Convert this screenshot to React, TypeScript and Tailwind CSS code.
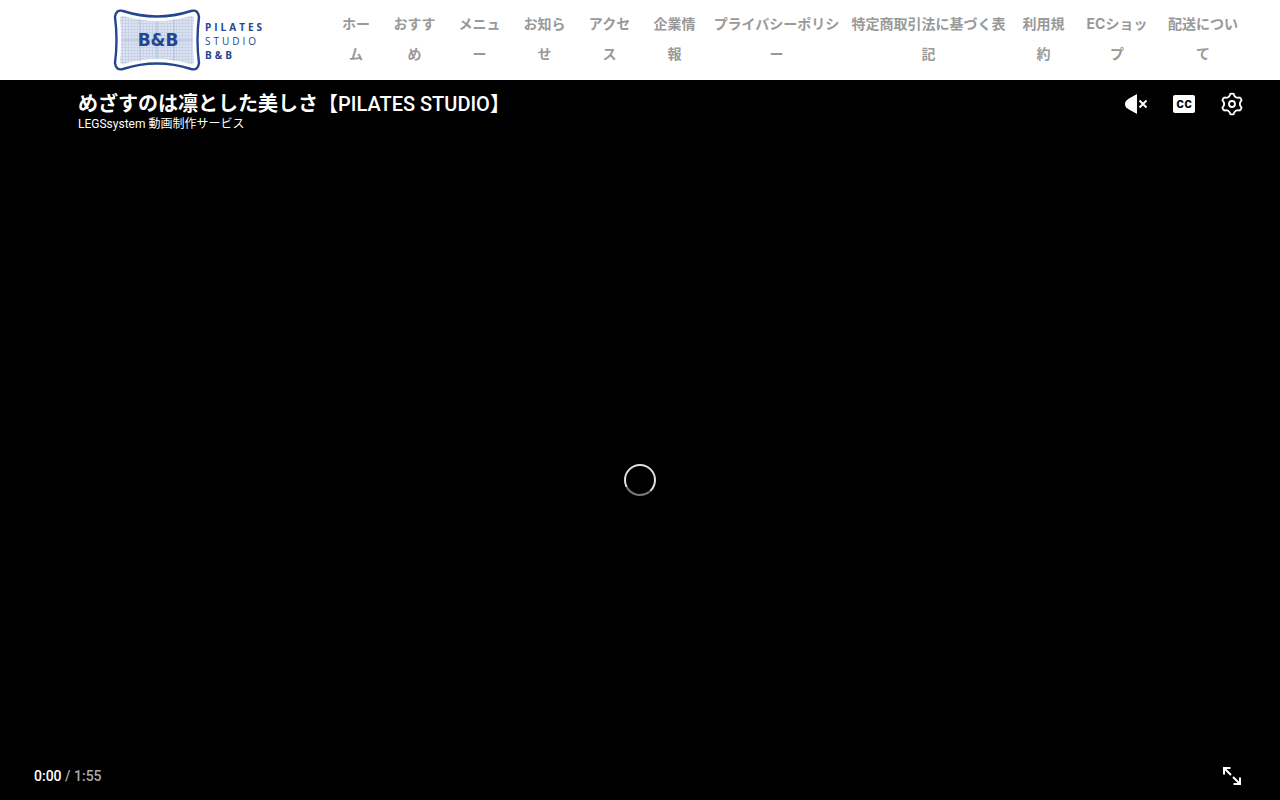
import type { ReactNode } from 'react';

type NavItem = { first: string; second: string };

const navItems: NavItem[] = [
  { first: 'ホー', second: 'ム' },
  { first: 'おすす', second: 'め' },
  { first: 'メニュ', second: 'ー' },
  { first: 'お知ら', second: 'せ' },
  { first: 'アクセ', second: 'ス' },
  { first: '企業情', second: '報' },
  { first: 'プライバシーポリシ', second: 'ー' },
  { first: '特定商取引法に基づく表', second: '記' },
  { first: '利用規', second: '約' },
  { first: 'ECショッ', second: 'プ' },
  { first: '配送につい', second: 'て' },
];

const FRAME = 'M13 3Q47 14 81 3Q88 1 89 9Q86 32 89 55Q88 63 81 61Q47 50 13 61Q6 63 5 55Q8 32 5 9Q6 1 13 3Z';
const FRAME_INNER = 'M14 8Q47 18 80 8Q84 7 84 11Q82 32 84 53Q84 57 80 56Q47 46 14 56Q10 57 10 53Q12 32 10 11Q10 7 14 8Z';

const Logo = () => (
  <svg viewBox="0 0 160 64" className="h-16 w-40" role="img" aria-label="PILATES STUDIO B&B">
    <defs>
      <pattern id="logo-grid" width="3" height="3" patternUnits="userSpaceOnUse">
        <rect width="3" height="3" fill="#dde4f1" />
        <path d="M0 .5h3M.5 0v3" stroke="#c8d3e8" strokeWidth="1" />
      </pattern>
    </defs>
    <path d={FRAME} fill="#fff" stroke="#24468f" strokeWidth="2.4" />
    <path d={FRAME_INNER} fill="url(#logo-grid)" />
    <path d="M11 32h72M30 11v42M47 13v38M64 11v42" stroke="#b0bfde" strokeWidth="1" />
    <text x="48" y="38" textAnchor="middle" fill="#24468f" className="font-['DejaVu_Sans'] text-[17px] font-bold">
      B&amp;B
    </text>
    <g fill="#24468f" className="font-['Open_Sans'] text-[10px]">
      <text x="95" y="23" className="font-bold tracking-[3px]">PILATES</text>
      <text x="95" y="37" className="tracking-[3px]">STUDIO</text>
      <text x="95" y="51" className="font-bold tracking-[3px]">B&amp;B</text>
    </g>
  </svg>
);

const MuteIcon = () => (
  <svg viewBox="0 0 24 24" className="size-6" fill="none">
    <path d="M13 2v20L5 17.5C2.5 16 1 14.5 1 12s1.5-4 4-5.500z" fill="currentColor" />
    <path d="M15.5 8.5l7 7M22.5 8.5l-7 7" stroke="currentColor" strokeWidth="2" />
  </svg>
);

const CaptionsIcon = () => (
  <svg viewBox="0 0 24 24" className="size-6">
    <rect x="1" y="3" width="22" height="18" rx="2" fill="currentColor" />
    <text x="8" y="16" textAnchor="middle" fill="#000" className="font-[Roboto] text-[11px] font-black">
      C
    </text>
    <text x="16" y="16" textAnchor="middle" fill="#000" className="font-[Roboto] text-[11px] font-black">
      C
    </text>
  </svg>
);

const SettingsIcon = () => (
  <svg viewBox="0 0 24 24" className="size-6" fill="none" stroke="currentColor" strokeWidth="1.8" strokeLinejoin="round">
    <path d="M10.3 1.9Q12 1.200 13.7 1.9Q15 6.8 19.700 5.500Q21.200 6.600 21.600 8.400Q18 12 21.600 15.600Q21.200 17.400 19.700 18.500Q15 17.200 13.700 22.100Q12 22.800 10.300 22.100Q9 17.200 4.300 18.500Q2.800 17.400 2.400 15.600Q6 12 2.400 8.400Q2.800 6.600 4.300 5.500Q9 6.800 10.300 1.900Z" />
    <circle cx="12" cy="12" r="3" />
  </svg>
);

const FullscreenIcon = () => (
  <svg viewBox="0 0 24 24" className="size-6" fill="none" stroke="currentColor" strokeWidth="2">
    <path d="M4 10.5V4h6.500M4 4l7 7M20 13.5V20h-6.500M20 20l-7-7" />
  </svg>
);

const Spinner = () => (
  <svg viewBox="0 0 34 34" className="size-[34px]" fill="none" strokeWidth="2" role="status" aria-label="読み込み中">
    <circle cx="17" cy="17" r="15" stroke="#e0e0e0" />
    <path d="M27 28A15 15 0 0 1 3.5 24" stroke="#000" strokeWidth="3" />
    <path d="M26.64 28.49A15 15 0 0 1 3.75 24.04" stroke="#777" />
  </svg>
);

const PlayerButton = ({ label, children }: { label: string; children: ReactNode }) => (
  <button type="button" aria-label={label} className="flex size-12 items-center justify-center text-white">
    {children}
  </button>
);

const Header = () => (
  <header className="flex h-20 items-center bg-white pr-8">
    <a href="#home" className="ml-[110px] shrink-0">
      <Logo />
    </a>
    <nav className="ml-[60px] flex-1 pb-[2px]">
      <ul className="grid grid-cols-[52fr_65fr_65fr_65fr_65fr_65fr_139fr_165fr_65fr_82fr_90fr] text-center text-[14px] leading-[30px] font-bold text-[#999]">
        {navItems.map((item) => (
          <li key={item.first} className="flex justify-center">
            <a href="#menu" className="whitespace-nowrap">
              {item.first}
              <br />
              {item.second}
            </a>
          </li>
        ))}
      </ul>
    </nav>
  </header>
);

const VideoPlayer = () => (
  <section className="flex flex-1 flex-col bg-black font-[Roboto,'Noto_Sans_CJK_JP',sans-serif] text-white">
    <div className="flex h-32 items-start justify-between pr-6 pl-[78px]">
      <div className="pt-3">
        <h1 className="text-[20px] leading-6 font-medium">
          <a href="#video">
            <span className="font-bold">めざすのは凛とした美しさ【</span>PILATES STUDIO<span className="font-bold">】</span>
          </a>
        </h1>
        <p className="text-[12px] leading-4">
          <a href="#channel">LEGSsystem 動画制作サービス</a>
        </p>
      </div>
      <div className="flex">
        <PlayerButton label="ミュート解除">
          <MuteIcon />
        </PlayerButton>
        <PlayerButton label="字幕">
          <CaptionsIcon />
        </PlayerButton>
        <PlayerButton label="設定">
          <SettingsIcon />
        </PlayerButton>
      </div>
    </div>

    <div className="flex flex-1 items-center justify-center">
      <Spinner />
    </div>

    <div className="flex h-12 items-center justify-between pr-6 pl-[34px]">
      <p className="text-[14px] leading-5 font-medium">
        0:00 <span className="text-[#aaa]">/ 1:55</span>
      </p>
      <PlayerButton label="全画面">
        <FullscreenIcon />
      </PlayerButton>
    </div>
  </section>
);

const App = () => {
  return (
    <div lang="ja" className="flex min-h-screen flex-col font-[Inter,'Noto_Sans_CJK_JP',sans-serif]">
      <Header />
      <VideoPlayer />
    </div>
  );
};

export default App;
